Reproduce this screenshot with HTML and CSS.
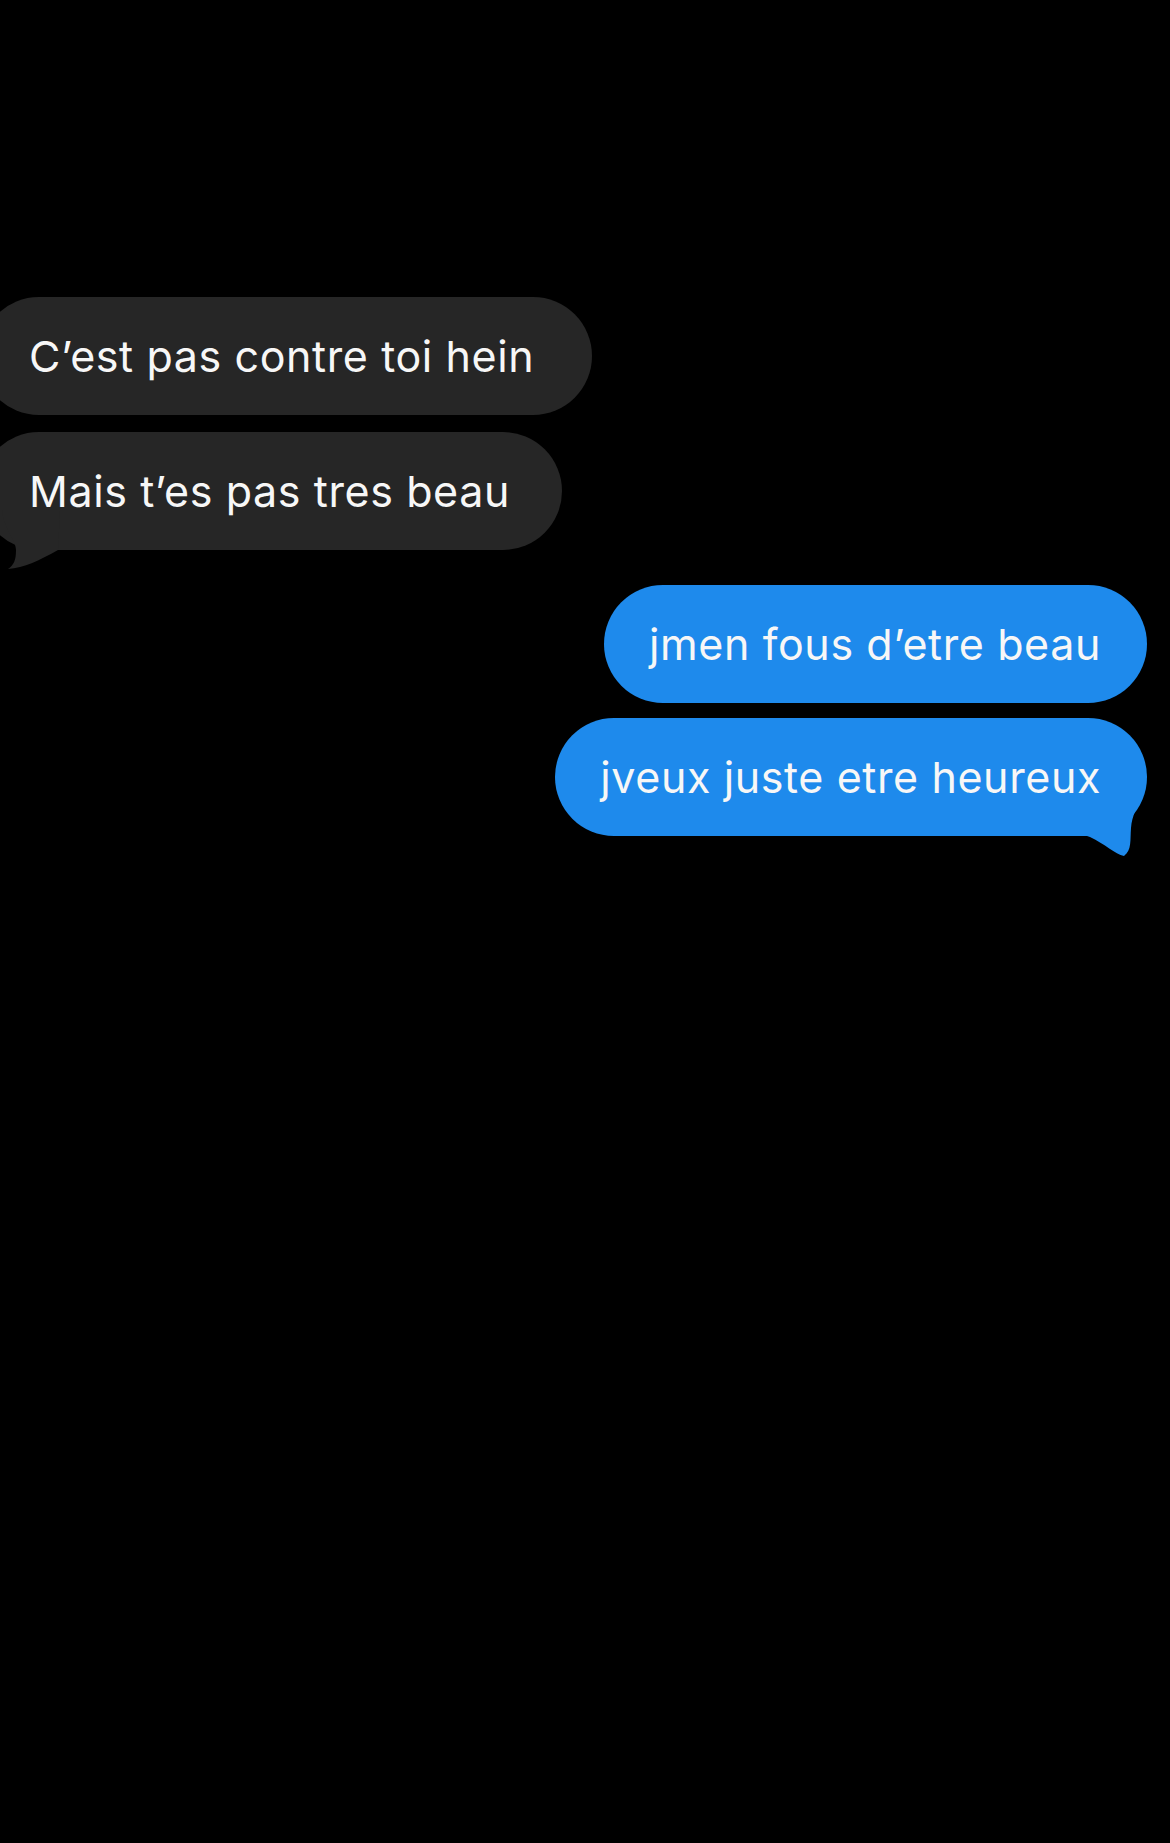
FILE: index.html
```html
<!DOCTYPE html>
<html lang="fr">
<head>
    <meta charset="UTF-8">
    <meta name="viewport" content="width=device-width, initial-scale=1.0">
    <title>Messages</title>
    <link rel="stylesheet" href="styles.css">
</head>
<body>
    <div class="thread">
        <div class="bubble received">C’est pas contre toi hein</div>
        <div class="bubble received last">
            Mais t’es pas tres beau
            <svg class="tail tail-left" width="60" height="60" viewBox="0 0 60 60">
                <path d="M2 0 C4 20 16 30 16 40 C16 50 14 55 8 59 C24 58 40 50 58 40 L60 0 Z" fill="#262626"/>
            </svg>
        </div>

        <div class="bubble sent first">jmen fous d’etre beau</div>
        <div class="bubble sent last">
            jveux juste etre heureux
            <svg class="tail tail-right" width="60" height="60" viewBox="0 0 60 60">
                <path d="M0 0 L56 0 C50 10 45 20 44 32 C43 44 45 54 37 60 C28 58 18 48 3 41 L0 40 Z" fill="#1e8aec"/>
            </svg>
        </div>
    </div>
</body>
</html>
```

FILE: styles.css
```css
body {
    margin: 0;
    background: #000;
    height: 1843px;
    font-family: Inter, "Liberation Sans", Arial, sans-serif;
    overflow: hidden;
}
.thread {
    display: flex;
    flex-direction: column;
    padding-top: 297px;
}
.bubble {
    position: relative;
    display: flex;
    align-items: center;
    height: 118px;
    box-sizing: border-box;
    border-radius: 59px;
    font-size: 43px;
    letter-spacing: 0.6px;
    color: #f7f7f7;
    white-space: nowrap;
}
.received {
    align-self: flex-start;
    margin-left: -20px;
    margin-bottom: 17px;
    padding: 0 58px 0 49px;
    background: #262626;
}
.received.last { padding-right: 52px; }
.sent {
    align-self: flex-end;
    margin-right: 23px;
    margin-bottom: 15px;
    padding: 0 46px 0 45px;
    background: #1e8aec;
}
.sent.first { margin-top: 18px; }
.tail { position: absolute; bottom: -20px; }
.tail-left { left: 20px; }
.tail-right { right: 0; }
```
